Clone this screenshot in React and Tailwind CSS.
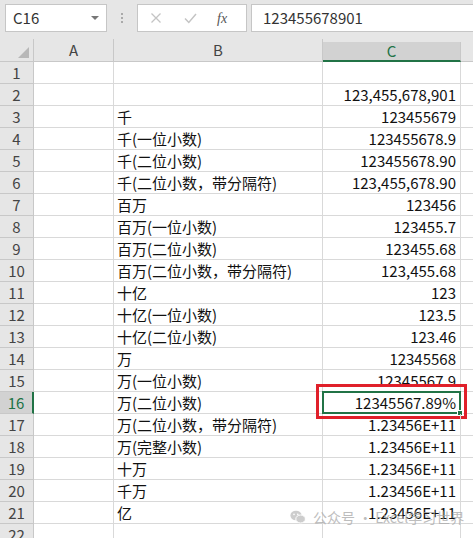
const labels = [
  "",
  "",
  "千",
  "千(一位小数)",
  "千(二位小数)",
  "千(二位小数，带分隔符)",
  "百万",
  "百万(一位小数)",
  "百万(二位小数)",
  "百万(二位小数，带分隔符)",
  "十亿",
  "十亿(一位小数)",
  "十亿(二位小数)",
  "万",
  "万(一位小数)",
  "万(二位小数)",
  "万(二位小数，带分隔符)",
  "万(完整小数)",
  "十万",
  "千万",
  "亿",
  "",
];

const values = [
  "",
  "123,455,678,901",
  "123455679",
  "123455678.9",
  "123455678.90",
  "123,455,678.90",
  "123456",
  "123455.7",
  "123455.68",
  "123,455.68",
  "123",
  "123.5",
  "123.46",
  "12345568",
  "12345567.9",
  "12345567.89%",
  "1.23456E+11",
  "1.23456E+11",
  "1.23456E+11",
  "1.23456E+11",
  "1.23456E+11",
  "",
];

const ACTIVE = 16;

function WeChatMark() {
  return (
    <svg width="16" height="14" viewBox="0 0 16 14">
      <ellipse cx="6" cy="5.5" rx="5.6" ry="4.8" fill="#bdbdbd" />
      <ellipse cx="10.6" cy="9" rx="4.8" ry="4" fill="#bdbdbd" stroke="#fff" strokeWidth="1" />
      <circle cx="4" cy="4.4" r="0.8" fill="#fff" />
      <circle cx="7.8" cy="4.4" r="0.8" fill="#fff" />
    </svg>
  );
}

function Toolbar() {
  return (
    <div className="flex h-[39px] items-start bg-[#e6e6e6] pt-1">
      <div className="ml-[5px] flex h-[28px] w-[102px] items-center justify-between border border-[#c6c6c6] bg-white pl-[7px] pr-[7px] text-[15px] text-[#333]">
        <span>C16</span>
        <span className="h-0 w-0 border-x-[4px] border-t-[4px] border-x-transparent border-t-[#777]" />
      </div>
      <div className="flex h-[28px] w-[30px] flex-col items-center justify-center gap-[2px]">
        <span className="h-[2px] w-[2px] bg-[#aaa]" />
        <span className="h-[2px] w-[2px] bg-[#aaa]" />
        <span className="h-[2px] w-[2px] bg-[#aaa]" />
      </div>
      <div className="flex h-[28px] w-[110px] items-center border border-[#c6c6c6] bg-white">
        <svg width="12" height="12" viewBox="0 0 12 12" className="ml-[12px]">
          <path d="M1.5 1.5 L10.5 10.5 M10.5 1.5 L1.5 10.5" stroke="#c4c4c4" strokeWidth="1.3" />
        </svg>
        <svg width="13" height="11" viewBox="0 0 13 11" className="ml-[22px]">
          <path d="M1 5.5 L4.8 9.5 L12 1" stroke="#c4c4c4" strokeWidth="1.5" fill="none" />
        </svg>
        <span className="ml-[20px] font-['Liberation_Serif'] text-[14px] italic text-[#555]">fx</span>
      </div>
      <div className="ml-[4px] flex h-[28px] flex-1 items-center border border-r-0 border-[#c6c6c6] bg-white pl-[11px] text-[15px] text-[#333]">
        123455678901
      </div>
    </div>
  );
}

function HeaderRow() {
  return (
    <div className="flex h-[23px] bg-[#e6e6e6] text-[15px] text-[#444]">
      <div className="relative w-[34px] shrink-0 border-b border-r border-[#c8c8c8]">
        <span className="absolute bottom-[3px] right-[4px] h-0 w-0 border-b-[11px] border-l-[11px] border-b-[#b8b8b8] border-l-transparent" />
      </div>
      <div className="flex w-[80px] shrink-0 items-center justify-center border-b border-r border-[#c8c8c8]">A</div>
      <div className="flex w-[209px] shrink-0 items-center justify-center border-b border-r border-[#c8c8c8]">B</div>
      <div className="mt-[3px] flex w-[138px] shrink-0 items-center justify-center border-b-2 border-r border-b-[#217346] border-r-[#c8c8c8] bg-[#d2d2d2] text-[#217346]">
        C
      </div>
      <div className="flex-1 border-b border-[#c8c8c8]" />
    </div>
  );
}

function Row({ n }) {
  const active = n === ACTIVE;
  return (
    <div className="flex h-[22px] text-[15px] leading-[21px]">
      <div
        className={
          active
            ? "w-[34px] shrink-0 border-b border-r-2 border-b-[#c8c8c8] border-r-[#217346] bg-[#d2d2d2] text-center text-[#217346]"
            : "w-[34px] shrink-0 border-b border-r border-[#c8c8c8] bg-[#e6e6e6] text-center text-[#444]"
        }
      >
        {n}
      </div>
      <div className="w-[80px] shrink-0 border-b border-r border-[#d9d9d9]" />
      <div className="w-[209px] shrink-0 whitespace-nowrap border-b border-r border-[#d9d9d9] pl-[3px] text-[#111]">
        {labels[n - 1]}
      </div>
      <div className="relative w-[138px] shrink-0 whitespace-nowrap border-b border-r border-[#d9d9d9] pr-[4px] text-right text-[#111]">
        {values[n - 1]}
        {active && (
          <>
            <span className="absolute -left-[1px] -top-[1px] h-[23px] w-[139px] border-2 border-[#217346]" />
            <span className="absolute -bottom-[3px] -right-[3px] h-[6px] w-[6px] border border-white bg-[#217346]" />
            <span className="absolute -left-[7px] -top-[8px] h-[35px] w-[151px] border-[3px] border-[#e0202a]" />
          </>
        )}
      </div>
      <div className="flex-1 border-b border-[#d9d9d9]" />
    </div>
  );
}

export default function App() {
  const rows = Array.from({ length: 22 }, (_, i) => i + 1);
  return (
    <div className="relative h-[538px] w-[473px] overflow-hidden bg-white font-['Noto_Sans_CJK_SC',sans-serif]">
      <Toolbar />
      <HeaderRow />
      {rows.map((n) => (
        <Row key={n} n={n} />
      ))}
      <div className="pointer-events-none absolute left-[290px] top-[507px] flex items-center gap-[7px] whitespace-nowrap text-[14px] leading-[20px] text-[#a8a8a8] opacity-75">
        <WeChatMark />
        <span>公众号 · Excel学习世界</span>
      </div>
    </div>
  );
}
